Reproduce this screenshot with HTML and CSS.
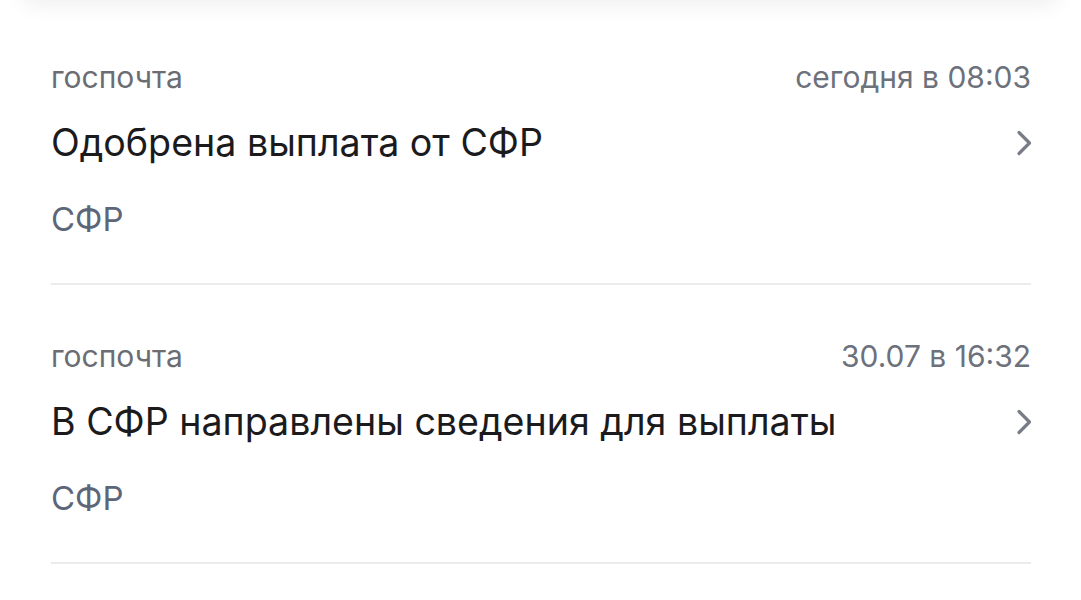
FILE: index.html
```html
<!DOCTYPE html>
<html lang="ru">
<head>
<meta charset="utf-8">
<link rel="stylesheet" href="styles.css">
</head>
<body>
<div class="top-card"></div>
<div class="list">
  <div class="item">
    <div class="meta">
      <span class="source">госпочта</span>
      <span class="time">сегодня в 08:03</span>
    </div>
    <div class="title-row">
      <span class="title">Одобрена выплата от СФР</span>
      <svg class="chev" width="16" height="26" viewBox="0 0 16 26"><path d="M3 2.5 L13.5 13 L3 23.5" fill="none" stroke="#787d87" stroke-width="3.2" stroke-linecap="round" stroke-linejoin="round"/></svg>
    </div>
    <div class="org">СФР</div>
  </div>
  <div class="item">
    <div class="meta">
      <span class="source">госпочта</span>
      <span class="time">30.07 в 16:32</span>
    </div>
    <div class="title-row">
      <span class="title">В СФР направлены сведения для выплаты</span>
      <svg class="chev" width="16" height="26" viewBox="0 0 16 26"><path d="M3 2.5 L13.5 13 L3 23.5" fill="none" stroke="#787d87" stroke-width="3.2" stroke-linecap="round" stroke-linejoin="round"/></svg>
    </div>
    <div class="org">СФР</div>
  </div>
</div>
</body>
</html>
```
FILE: styles.css
```css
html, body {
  margin: 0;
  padding: 0;
  background: #ffffff;
  font-family: "Inter", "Roboto", "Liberation Sans", sans-serif;
  overflow: hidden;
}
.top-card {
  height: 40px;
  margin: -40px 24px 0;
  background: #ffffff;
  box-shadow: 0 4px 22px rgba(0, 0, 0, 0.07);
}
.list {
  padding: 6px 50px 0 51px;
}
.item {
  padding: 54px 0 44px;
  border-bottom: 2px solid #ebebed;
}
.meta {
  display: flex;
  justify-content: space-between;
  align-items: center;
  height: 34px;
  font-size: 30px;
  line-height: 34px;
}
.source {
  color: #6b6d72;
}
.time {
  color: #6c717b;
}
.title-row {
  margin-top: 27px;
  height: 44px;
  display: flex;
  justify-content: space-between;
  align-items: center;
}
.title {
  font-size: 37.6px;
  line-height: 44px;
  color: #1b1b1d;
}
.chev {
  display: block;
  margin-right: -1px;
}
.org {
  margin-top: 34px;
  font-size: 33px;
  line-height: 40px;
  color: #5d6679;
}
```
